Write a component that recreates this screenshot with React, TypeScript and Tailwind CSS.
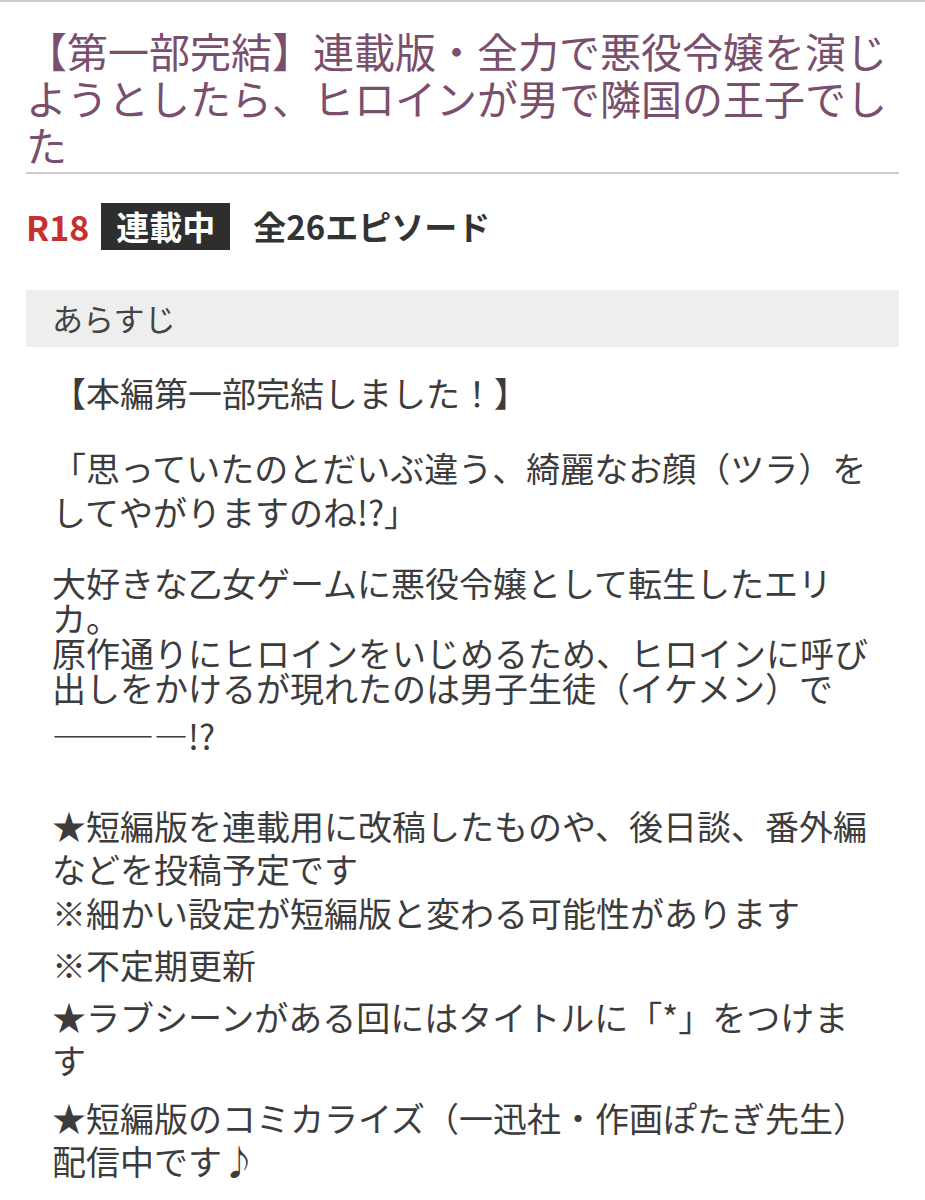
import React from 'react'

const jp = "font-['Noto_Sans_CJK_JP','Noto_Sans',sans-serif]"

// each synopsis line: text, height of its line box, extra space above
type Line = { text: string; h: number; mt?: number }

const synopsis: Line[] = [
  { text: '【本編第一部完結しました！】', h: 35, mt: 28 },
  { text: '「思っていたのとだいぶ違う、綺麗なお顔（ツラ）を', h: 35, mt: 40 },
  { text: 'してやがりますのね!?」', h: 52 },
  { text: '大好きな乙女ゲームに悪役令嬢として転生したエリ', h: 35, mt: 28 },
  { text: 'カ。', h: 35 },
  { text: '原作通りにヒロインをいじめるため、ヒロインに呼び', h: 35 },
  { text: '出しをかけるが現れたのは男子生徒（イケメン）で', h: 35 },
  { text: '――――!?', h: 52, mt: 4 },
  { text: '★短編版を連載用に改稿したものや、後日談、番外編', h: 52, mt: 38 },
  { text: 'などを投稿予定です', h: 35 },
  { text: '※細かい設定が短編版と変わる可能性があります', h: 52 },
  { text: '※不定期更新', h: 52 },
  { text: '★ラブシーンがある回にはタイトルに「*」をつけま', h: 52 },
  { text: 'す', h: 35 },
  { text: '★短編版のコミカライズ（一迅社・作画ぽたぎ先生）', h: 52, mt: 14 },
  { text: '配信中です♪', h: 35 },
]

export default function App() {
  return (
    <div className={`min-h-[1200px] bg-white border-t-2 border-[#cccccc] ${jp}`}>
      <div className="px-[26px] pt-[25px]">
        <h1 className="text-[41px] leading-[47px] font-normal text-[#7a4e6d]">
          【第一部完結】連載版・全力で悪役令嬢を演じようとしたら、ヒロインが男で隣国の王子でした
        </h1>
        <div className="mt-[4px] h-[2px] bg-[#cccccc]" />

        <div className="mt-[29px] flex items-center h-[47px]">
          <span className="text-[34px] font-bold text-[#c8302e]">R18</span>
          <span className="ml-[12px] h-[47px] px-[15px] flex items-center bg-[#2e2e2e] text-white text-[33px] font-bold">
            連載中
          </span>
          <span className="ml-[23px] text-[33px] font-bold text-[#333333]">全26エピソード</span>
        </div>

        <div className="mt-[40px] h-[57px] bg-[#eeeeee] px-[26px] flex items-center">
          <span className="text-[31px] text-[#444444]">あらすじ</span>
        </div>

        <div className="pl-[26px] text-[34px] text-[#3c3c3c]">
          {synopsis.map((line, i) => (
            <div
              key={i}
              className="whitespace-nowrap flex items-center"
              style={{ height: line.h, marginTop: line.mt ?? 0 }}
            >
              {line.text}
            </div>
          ))}
        </div>
      </div>
    </div>
  )
}
